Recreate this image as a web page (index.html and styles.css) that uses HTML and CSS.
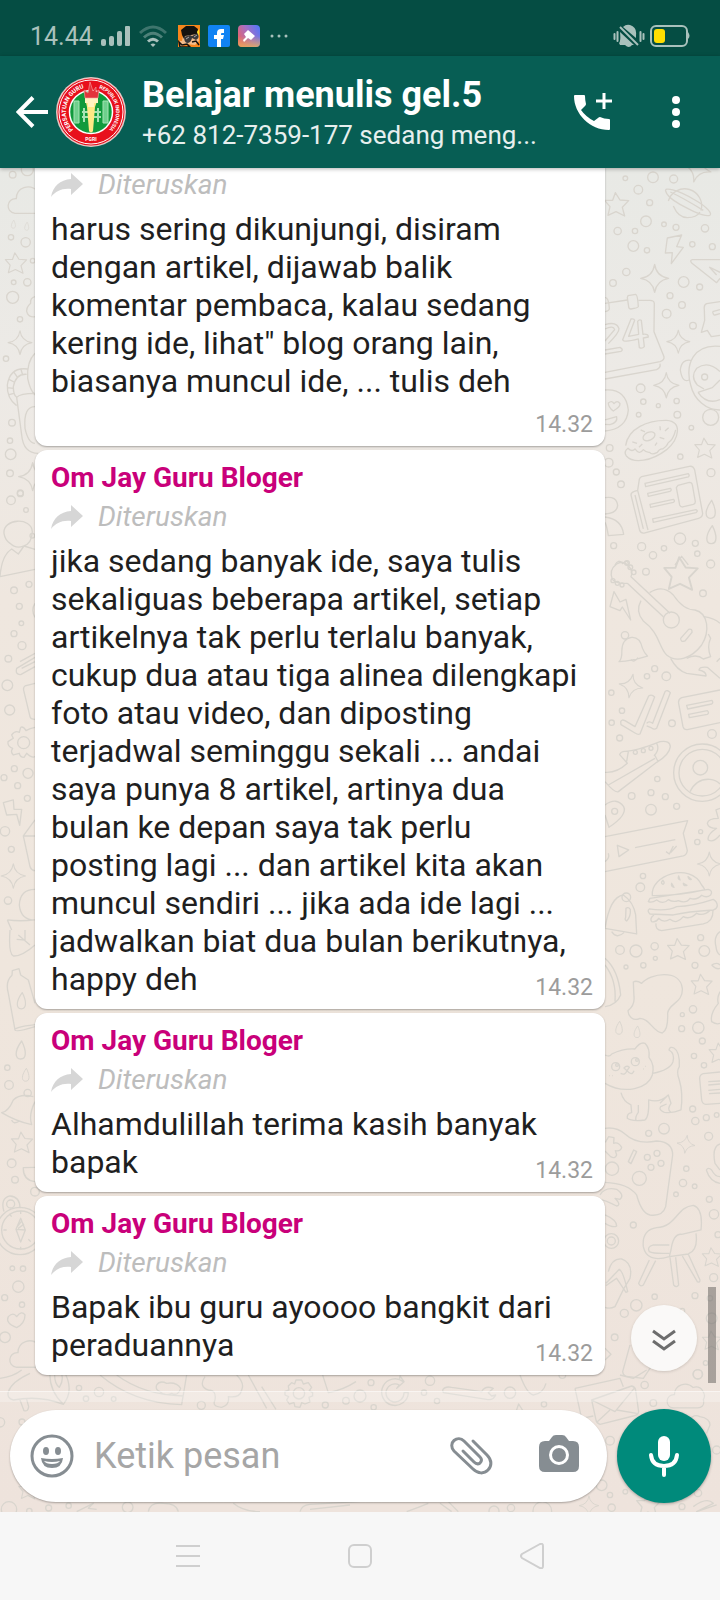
FILE: index.html
```html
<!DOCTYPE html>
<html lang="id">
<head>
    <meta charset="UTF-8">
    <meta name="viewport" content="width=device-width, initial-scale=1.0">
    <title>Belajar menulis gel.5</title>
    <link rel="stylesheet" href="styles.css">
</head>
<body>
    <div class="status-bar">
        <div class="status-left">
            <span class="clock">14.44</span>
            <svg class="signal" width="30" height="22" viewBox="0 0 30 22">
                <rect x="0" y="14" width="5" height="7" rx="2"/>
                <rect x="8" y="11" width="5" height="10" rx="2"/>
                <rect x="16" y="6" width="5" height="15" rx="2"/>
                <rect x="24" y="1" width="5" height="20" rx="1"/>
            </svg>
            <svg class="wifi" width="28" height="22" viewBox="0 0 28 22">
                <g fill="none" stroke="#a9c1bc" stroke-width="3">
                    <path d="M1 8Q14-4 27 8" opacity=".35"/>
                    <path d="M5 12.500Q14 4 23 12.500" opacity=".45"/>
                    <path d="M9 16.500Q14 12 19 16.500"/>
                </g>
                <path d="M11.500 19.500Q14 17.500 16.500 19.500L14 22z"/>
            </svg>
            <svg class="app" width="22" height="22" viewBox="0 0 22 22">
                <rect width="22" height="22" fill="#f7861c"/>
                <path d="M5 11L20 6L21 16L17 20L8 19L2 22L1 18Q1 15 4 16z" fill="#f4bd8c"/>
                <path d="M3 5L8 1H16L20 4L19 9L7 11L6 14L4 10z" fill="#15120f"/>
                <path d="M6 12L12 10L14 11L20 8Q22 13 18 15L14 13Q13 18 9 18Q6 17 6 12z" fill="#3a3a3c"/>
                <path d="M8 14L11 12M16 12L19 10" stroke="#aaa"/>
                <path d="M1 17L4 20L9 19L12 22H2zM14 17L18 16L21 20" fill="none" stroke="#15120f" stroke-width="1.500"/>
                <path d="M19 7L21 4V11z" fill="#ffe01a"/>
            </svg>
            <svg class="app" width="22" height="22" viewBox="0 0 22 22">
                <rect width="22" height="22" rx="2" fill="#1183f3"/>
                <path d="M9 22V14H6V10H9V8Q9 4 13 4H16V8H14Q13 8 13 9V10H16L15 14H13V22z" fill="#fff"/>
            </svg>
            <svg class="app" width="22" height="22" viewBox="0 0 22 22">
                <defs>
                    <linearGradient id="cleaner" x1="0" y1=".7" x2="1" y2=".2">
                        <stop offset="0" stop-color="#ea6263"/>
                        <stop offset=".5" stop-color="#a76fc4"/>
                        <stop offset="1" stop-color="#5777f5"/>
                    </linearGradient>
                    <linearGradient id="cleaner-low" x1="0" y1="0" x2="0" y2="1">
                        <stop offset=".5" stop-color="#e6b35b" stop-opacity="0"/>
                        <stop offset="1" stop-color="#e6b35b" stop-opacity=".8"/>
                    </linearGradient>
                </defs>
                <rect width="22" height="22" rx="4" fill="url(#cleaner)"/>
                <rect width="22" height="22" rx="4" fill="url(#cleaner-low)"/>
                <path d="M10 5L17 11L13 15L10 13L6 17L5 15L8 12L6 9z" fill="#fff"/>
            </svg>
            <svg class="more" width="18" height="4" viewBox="0 0 18 4">
                <circle cx="2" cy="2" r="1.500"/>
                <circle cx="9" cy="2" r="1.500"/>
                <circle cx="16" cy="2" r="1.500"/>
            </svg>
        </div>
        <div class="status-right">
            <svg width="32" height="24" viewBox="0 0 32 24">
                <path d="M12 21H19Q16 25 12 21M6 19Q8 17 7 8L21 21H7zM10 3Q13 0 17 1Q24 3 23 11V14z" fill="#a9c1bc"/>
                <path d="M7 3L25 21" stroke="#a9c1bc" stroke-width="2"/>
                <path d="M1.500 10v5M4.500 8v9M27.500 8v9M30.500 10v5" stroke="#a9c1bc" stroke-width="2" stroke-linecap="round"/>
            </svg>
            <svg width="40" height="22" viewBox="0 0 40 22">
                <rect x="1" y="1" width="36" height="20" rx="5" fill="none" stroke="#a9c1bc" stroke-width="2"/>
                <path d="M38 7Q41 11 38 14z" fill="#a9c1bc"/>
                <rect x="4" y="4" width="11" height="14" rx="3" fill="#ffdd00"/>
            </svg>
        </div>
    </div>

    <header class="chat-header">
        <button class="icon-btn" aria-label="Kembali">
            <svg width="32" height="32" viewBox="0 0 32 32" fill="none" stroke="#fff" stroke-width="4">
                <path d="M32 16H3M17 1.500L2.500 16L17 30.500"/>
            </svg>
        </button>
        <svg class="avatar" width="70" height="70" viewBox="0 0 70 70">
            <defs>
                <path id="ring-left" d="M17.300 52.700A25 25 0 0 1 30 10.500"/>
                <path id="ring-right" d="M43 11.300A25 25 0 0 1 44.400 58.200"/>
            </defs>
            <circle cx="35" cy="35" r="35" fill="#e9c7c4"/>
            <circle cx="35" cy="35" r="33.500" fill="#e8101c"/>
            <circle cx="35" cy="35" r="32" fill="none" stroke="#fff"/>
            <circle cx="35" cy="35" r="21.500" fill="#109a3c" stroke="#fff" stroke-width="1.500"/>
            <g fill="#6fd08d" stroke="#a6e3b4">
                <path d="M18 24H23V46H18zM47 24H52V46H47z"/>
                <path d="M26 35H45M26 40H45M28 31V45M42 31V45" fill="none" stroke-width="2"/>
            </g>
            <path d="M29 21L31 30L33 54Q35 57 37 54L39 30L42 21z" fill="#ffe985"/>
            <path d="M29 21H42V26H38V30H32V26H29z" fill="#fff3c0"/>
            <path d="M29 21L28 13L32 16L34 5L37 14L40 10L40 15L43 13L42 21z" fill="#e2343c" stroke="#f6a6a4" stroke-width=".600"/>
            <g class="ring-text">
                <text font-size="6"><textPath href="#ring-left">PERSATUAN GURU</textPath></text>
                <text font-size="5"><textPath href="#ring-right">REPUBLIK INDONESIA</textPath></text>
                <text font-size="5" x="35" y="64" text-anchor="middle">PGRI</text>
            </g>
        </svg>
        <div class="chat-title">
            <h1>Belajar menulis gel.5</h1>
            <p>+62 812-7359-177 sedang meng...</p>
        </div>
        <button class="icon-btn call" aria-label="Panggilan grup">
            <svg width="40" height="40" viewBox="0 0 40 40" fill="#fff">
                <path d="M3 3H12Q13 3 13 4Q13 8 14 12Q14 13 13 14L9 18Q14 25 22 29L26 26Q27 25 28 25Q32 27 37 27Q38 27 38 28V37Q38 38 37 38C18 38 2 22 2 4Q2 3 3 3z"/>
                <path d="M32 1V17M24 9H40" stroke="#fff" stroke-width="3"/>
            </svg>
        </button>
        <button class="icon-btn" aria-label="Menu">
            <svg width="8" height="32" viewBox="0 0 8 32" fill="#fff">
                <circle cx="4" cy="4" r="4"/>
                <circle cx="4" cy="16" r="4"/>
                <circle cx="4" cy="28" r="4"/>
            </svg>
        </button>
    </header>

    <main class="conversation">
        <!-- wallpaper doodles, groups are drawn at 3x -->
        <svg class="wallpaper" viewBox="0 168 720 1344" preserveAspectRatio="xMidYMin slice" aria-hidden="true">
            <defs>
                <path id="star" d="M-4-36L10-14L36-12L17 8L24 34L-2 21L-26 32L-20 6L-36-13L-12-13z"/>
                <path id="spark" d="M0-42Q5-6 42 0Q6 6 0 42Q-6 6-42 0Q-6-5 0-42z"/>
                <path id="drop" d="M3-28C-19 2-18 26 0 26S18 2 3-28z"/>
                <path id="bell" d="M-40 35Q-30 25-31 0Q-30-38 0-42Q26-44 34-8Q40 8 50 17Q0 32-40 35zM-2 28Q8 40 20 22"/>
                <path id="cloud" d="M0 82C-30 78-26 36 4 38C4 4 44-8 66 14C96 4 110 40 100 54C106 74 92 82 82 82z"/>
            </defs>
            <g transform="translate(500 165) scale(.3333)">
                <circle cx="376" cy="40" r="7"/><circle cx="459" cy="37" r="16"/><circle cx="521" cy="42" r="12"/>
                <circle cx="415" cy="74" r="13"/><circle cx="449" cy="113" r="9"/><circle cx="438" cy="169" r="16"/>
                <circle cx="492" cy="178" r="7"/><circle cx="528" cy="187" r="9"/><circle cx="615" cy="190" r="11"/>
                <circle cx="353" cy="198" r="11"/><circle cx="405" cy="198" r="8"/><circle cx="400" cy="243" r="16"/>
                <circle cx="441" cy="256" r="8"/><circle cx="577" cy="238" r="8"/><circle cx="637" cy="245" r="9"/>
                <circle cx="379" cy="321" r="11"/><circle cx="339" cy="354" r="10"/><circle cx="551" cy="351" r="16"/>
                <circle cx="599" cy="366" r="9"/><circle cx="510" cy="392" r="9"/><circle cx="546" cy="420" r="10"/>
                <circle cx="500" cy="446" r="13"/><circle cx="579" cy="482" r="10"/><circle cx="422" cy="670" r="13"/>
                <circle cx="430" cy="710" r="8"/><circle cx="475" cy="722" r="6"/><circle cx="530" cy="708" r="8"/>
                <circle cx="532" cy="749" r="10"/><circle cx="416" cy="749" r="7"/><circle cx="574" cy="788" r="7"/>
                <circle cx="541" cy="875" r="8"/><circle cx="329" cy="849" r="10"/><circle cx="326" cy="893" r="13"/>
                <circle cx="349" cy="921" r="9"/><circle cx="363" cy="958" r="10"/><circle cx="633" cy="923" r="12"/>
                <circle cx="540" cy="1121" r="17"/><circle cx="586" cy="1135" r="9"/><circle cx="592" cy="1166" r="8"/>
                <circle cx="425" cy="1145" r="12"/><circle cx="492" cy="1150" r="8"/><circle cx="459" cy="1171" r="11"/>
                <circle cx="341" cy="1142" r="9"/>
                <use href="#star" x="350" y="119"/>
                <use href="#star" transform="translate(615 850) scale(.85)"/>
                <use href="#spark" x="464" y="340"/>
                <use href="#spark" transform="translate(535 530) scale(.82)"/>
                <use href="#spark" transform="translate(499 661) scale(.9)"/>
                <use href="#spark" transform="translate(592 10) rotate(15)"/>
                <use href="#drop" x="632" y="1034"/>
                <use href="#drop" x="634" y="1110"/>
                <path d="M505 108A44 44 0 1 1 603 137M520 123Q535 158 562 158Q590 158 600 141"/>
                <path d="M497 78C492 66 530 72 585 105C625 128 638 148 629 151C611 156 577 138 540 118C508 100 499 88 497 78zM511 81Q548 98 610 136"/>
                <path d="M502 219L545 210L530 245L550 247L514 296L517 263L496 264z"/>
                <path d="M660 284H577Q568 286 576 295L650 353L660 340M628 306L660 322M628 306L650 330"/>
                <path d="M315 415L382 405M415 406L450 406Q462 406 463 415L462 500L492 575Q494 586 480 590L315 622M315 642L470 614Q483 608 480 596"/>
                <path d="M384 392L407 388Q413 389 415 425Q414 429 393 432Q386 431 386 425L382 398zM315 398Q326 396 328 430Q329 437 315 440"/>
                <path d="M315 479Q350 468 357 491Q358 503 325 536M315 492Q340 480 344 494L315 528M393 462L368 524Q372 534 415 522L418 548Q427 552 433 545L430 519L445 516Q446 506 429 508L424 466Q418 462 413 469L416 508L386 514L404 466Q402 460 393 462zM315 555L360 547Q372 554 363 559L315 567"/>
                <path d="M660 410L620 416Q611 420 613 433L614 466L604 502L622 496L634 515L660 511M638 440L660 434M638 440Q640 452 645 450L660 446"/>
                <path d="M660 544C580 536 555 598 572 660C583 706 620 736 660 735M572 586Q545 582 541 615Q547 655 567 645M660 620Q625 585 590 610Q570 635 592 660L612 672M594 682Q620 720 660 704M594 682L637 668L660 645"/>
                <circle cx="614" cy="636" r="9"/><circle cx="632" cy="757" r="24"/>
                <path d="M315 675Q378 670 385 735Q380 792 315 798M325 714Q336 705 342 716Q352 704 360 716Q361 726 340 738Q325 727 325 714zM315 765L350 755Q354 773 330 779L315 778"/>
                <path d="M377 842C384 790 444 765 500 766C548 770 538 822 500 854C455 889 401 897 379 873Q370 860 384 850Q396 862 405 852Q418 871 430 854Q438 863 449 862Q455 871 472 862Q480 850 488 852Q502 843 504 834Q520 825 527 795"/>
                <ellipse cx="447" cy="814" rx="19" ry="12" transform="rotate(-25 447 814)"/>
                <path d="M397 831L411 835M427 837L417 847M422 795L435 801M480 784L481 796M506 788L495 798M479 817L493 822M471 833L465 842"/>
                <path d="M425 935L568 904Q580 902 584 915L608 1045Q608 1057 596 1060L435 1104Q423 1107 419 1096L393 990Q393 982 403 979L413 976L418 943Q420 937 425 935zM413 976L444 1095M405 990L430 1092M435 955L565 926Q570 932 565 936L437 965zM443 985L511 970Q517 975 510 979L445 994zM450 1018L520 1003Q527 1008 520 1012L452 1027zM458 1062L588 1034Q596 1038 588 1043L460 1072zM534 961L568 952Q576 952 577 959L586 1010Q586 1016 580 1018L548 1026Q541 1026 539 1020L529 968z"/>
                <path d="M315 998Q350 992 353 1022Q350 1046 315 1047M315 1056Q365 1062 371 1108L325 1112Q320 1080 315 1072"/>
                <path d="M525 1200L545 1174L565 1200M345 1200Q355 1180 368 1196Q385 1180 385 1200"/>
            </g>
            <g transform="translate(500 560) scale(.3333)">
                <circle cx="438" cy="35" r="10"/><circle cx="632" cy="12" r="12"/><circle cx="609" cy="100" r="10"/>
                <circle cx="464" cy="326" r="9"/><circle cx="441" cy="349" r="8"/><circle cx="499" cy="349" r="13"/>
                <circle cx="334" cy="398" r="8"/><circle cx="366" cy="452" r="8"/><circle cx="335" cy="488" r="8"/>
                <circle cx="359" cy="534" r="9"/><circle cx="516" cy="490" r="10"/><circle cx="636" cy="522" r="13"/>
                <circle cx="472" cy="657" r="8"/><circle cx="453" cy="698" r="9"/><circle cx="395" cy="708" r="10"/>
                <circle cx="496" cy="710" r="9"/><circle cx="530" cy="739" r="9"/><circle cx="453" cy="749" r="16"/>
                <circle cx="602" cy="815" r="6"/><circle cx="592" cy="846" r="8"/><circle cx="429" cy="948" r="8"/>
                <circle cx="421" cy="982" r="13"/><circle cx="602" cy="1133" r="9"/><circle cx="464" cy="1159" r="11"/>
                <circle cx="360" cy="1170" r="13"/><circle cx="408" cy="1173" r="18"/><circle cx="613" cy="1173" r="16"/>
                <circle cx="466" cy="1195" r="6"/>
                <use href="#star" transform="translate(543 42) scale(1.4)"/>
                <use href="#star" transform="translate(535 1168) scale(.9)"/>
                <use href="#spark" transform="translate(393 378) scale(.85) rotate(10)"/>
                <use href="#spark" transform="translate(628 912) scale(.85)"/>
                <use href="#bell" transform="translate(395 272) scale(.95)"/>
                <circle cx="375" cy="226" r="11"/>
                <path d="M337 58Q326 30 350 12Q368 0 383 15Q402 35 393 50L510 160M382 70L490 170M337 58Q350 72 382 70"/>
                <circle cx="381" cy="9" r="7"/><circle cx="391" cy="22" r="7"/><circle cx="401" cy="37" r="7"/><circle cx="339" cy="62" r="6"/><circle cx="352" cy="70" r="6"/><circle cx="366" cy="75" r="6"/>
                <path d="M449 98Q488 72 520 105Q550 150 585 150C626 160 630 215 605 255C575 295 530 310 500 285C475 260 480 220 430 183Q405 155 423 122"/>
                <circle cx="514" cy="180" r="24"/>
                <path d="M542 235L566 208Q577 205 576 217L555 243Q542 248 542 235zM612 170Q645 175 660 190M512 295Q530 330 560 340L618 348Q620 335 597 330Q598 320 622 322L660 355M560 295Q590 280 610 297L632 290Q620 260 632 235L625 222M650 305L660 295"/>
                <path d="M342 95L330 140L360 152L367 141L392 180L378 118L360 126z"/>
                <path d="M362 485Q365 477 375 482L405 500L446 408Q455 402 464 411L420 522Q414 525 405 519L363 494zM440 490Q447 481 458 490L495 395Q502 388 511 398L470 505Q463 510 455 504L440 498"/>
                <path d="M660 390L545 413Q534 418 536 430L549 500Q552 510 562 509L660 488M560 436L636 421Q641 428 635 432L563 447zM566 463L622 452Q629 459 622 463L568 473z"/>
                <path d="M315 637Q350 640 382 610L359 584Q362 575 372 574Q405 575 480 545Q510 540 511 560Q508 585 470 607L355 695Q345 700 315 665M380 604L385 575M325 675L465 595M462 587Q480 570 470 550M464 585L475 606"/>
                <circle cx="406" cy="577" r="6"/><circle cx="430" cy="572" r="6"/><circle cx="453" cy="565" r="6"/>
                <circle cx="607" cy="638" r="86"/><circle cx="607" cy="638" r="70"/><circle cx="601" cy="623" r="22"/>
                <path d="M570 695Q590 655 630 658Q650 660 660 672"/>
                <circle cx="344" cy="754" r="9"/>
                <path d="M315 735Q350 710 371 740Q383 765 327 802L315 765M315 830L563 782L550 820L562 872Q560 885 550 888L315 935M352 856L357 890L386 870zM405 863L526 839M498 875L508 882L520 858M512 878L530 858M315 905Q330 895 325 880"/>
                <path d="M660 745L648 750L655 775Q625 775 622 790Q625 805 650 805Q620 825 625 840Q640 850 660 825"/>
                <path d="M457 1007C450 945 570 905 605 975Q617 990 612 990Q540 1008 457 1007zM450 1015L625 988Q640 992 632 1005Q620 1015 605 1006Q590 1022 570 1015Q558 1032 535 1022Q520 1028 505 1019Q490 1035 470 1020Q455 1030 445 1025zM448 1047Q500 1055 530 1040Q580 1038 640 1018Q652 1025 652 1038Q650 1048 640 1050Q560 1055 520 1065L450 1062Q440 1052 448 1047zM462 1065Q448 1075 455 1085Q468 1088 476 1075Q490 1090 510 1078Q530 1095 550 1070Q570 1080 590 1060Q610 1070 632 1050M468 1090Q465 1110 485 1112L610 1092Q640 1085 639 1052"/>
                <path d="M489 961Q480 970 489 973Q496 970 489 961zM515 970Q512 980 522 982zM536 948Q532 958 540 960zM550 970Q550 980 561 976zM564 950Q567 962 574 958z"/>
                <circle cx="379" cy="1012" r="13"/>
                <path d="M315 1105Q330 1010 370 1005Q400 1025 407 1065L410 1122L315 1105M335 1115Q350 1138 372 1118M378 1045Q385 1040 391 1048Q393 1070 380 1083Q373 1080 377 1072z"/>
                <path d="M660 1115Q640 1130 648 1160Q650 1180 660 1185"/>
            </g>
            <g transform="translate(500 950) scale(.3333)">
                <circle cx="430" cy="46" r="8"/><circle cx="378" cy="51" r="6"/><circle cx="585" cy="46" r="9"/>
                <circle cx="579" cy="178" r="11"/><circle cx="547" cy="194" r="6"/><circle cx="545" cy="236" r="9"/>
                <circle cx="595" cy="233" r="17"/><circle cx="607" cy="273" r="9"/><circle cx="582" cy="318" r="8"/>
                <circle cx="612" cy="346" r="8"/><circle cx="578" cy="477" r="9"/><circle cx="586" cy="513" r="11"/>
                <circle cx="619" cy="503" r="9"/><circle cx="650" cy="495" r="7"/><circle cx="492" cy="536" r="16"/>
                <circle cx="446" cy="550" r="9"/><circle cx="626" cy="559" r="12"/><circle cx="559" cy="656" r="8"/>
                <circle cx="549" cy="699" r="11"/><circle cx="584" cy="709" r="7"/><circle cx="528" cy="733" r="7"/>
                <circle cx="628" cy="748" r="9"/><circle cx="642" cy="793" r="14"/><circle cx="400" cy="825" r="9"/>
                <circle cx="654" cy="854" r="9"/><circle cx="641" cy="983" r="12"/><circle cx="464" cy="1040" r="8"/>
                <circle cx="585" cy="1037" r="9"/><circle cx="409" cy="1066" r="17"/><circle cx="373" cy="1090" r="12"/>
                <circle cx="630" cy="1045" r="8"/><circle cx="635" cy="1105" r="16"/><circle cx="344" cy="1162" r="10"/>
                <circle cx="593" cy="1273" r="14"/><circle cx="617" cy="1239" r="7"/><circle cx="547" cy="1082" r="7"/>
                <use href="#star" transform="translate(605 104) scale(.87)"/>
                <use href="#star" transform="translate(636 922) scale(.8)"/>
                <use href="#star" transform="translate(636 1172) scale(.8)"/>
                <use href="#star" transform="translate(658 310) scale(.85)"/>
                <use href="#spark" transform="translate(558 583) scale(.65) rotate(8)"/>
                <use href="#drop" transform="translate(357 234) scale(.72)"/>
                <use href="#drop" transform="translate(411 246) scale(.65)"/>
                <path d="M400 96Q410 90 425 100C450 70 540 55 547 115C550 160 505 160 503 190Q505 240 487 249C460 248 450 205 420 205C400 215 385 200 384 182Q405 165 402 140z"/>
                <path d="M315 25Q355 60 362 135Q350 165 315 170M315 45Q350 90 345 155"/>
                <path d="M315 315Q330 322 335 312Q370 295 405 297Q420 275 435 280Q450 295 447 322Q465 345 457 375C445 415 375 435 315 400M458 370Q510 360 519 335Q525 310 507 300Q510 288 522 294Q540 305 538 350Q528 365 538 390Q550 430 543 480Q520 490 493 487Q475 480 482 470L500 462M363 428Q370 455 393 465L395 488Q380 490 382 505Q395 515 435 510Q448 500 446 450Q480 460 505 435L513 460Q500 478 512 486M415 465V487Q405 500 408 512M500 440L480 460"/>
                <circle cx="347" cy="350" r="12"/><circle cx="406" cy="335" r="12"/><circle cx="351" cy="345" r="4"/><circle cx="411" cy="330" r="4"/>
                <path d="M372 354Q380 345 388 352L381 362zM381 362Q376 377 362 370M381 362Q395 380 402 362M328 377h2M336 377h2M429 357h2M435 349h2"/>
                <path d="M660 366L610 371Q599 374 599 385L605 450Q607 462 618 463L660 460M625 395L660 393M625 405L660 402M625 421L660 418M627 431L660 429"/>
                <path d="M315 535Q350 530 375 552Q410 585 470 573Q518 575 518 615L497 770Q488 800 450 795Q425 790 410 735Q385 700 315 697M316 577L326 560L342 563L341 580Q355 575 365 592Q362 605 346 602L350 615Q345 628 332 620L315 603M401 600L410 605L393 641L385 635z"/>
                <circle cx="336" cy="656" r="20"/><circle cx="418" cy="685" r="21"/><circle cx="442" cy="622" r="9"/><circle cx="471" cy="610" r="9"/><circle cx="453" cy="652" r="9"/><circle cx="483" cy="640" r="9"/>
                <path d="M300 735Q315 710 350 718Q375 735 360 748L345 745Q365 765 350 768Q315 750 300 748M315 795Q350 810 350 828Q340 835 315 820"/>
                <circle cx="334" cy="873" r="22"/><circle cx="334" cy="873" r="12"/>
                <path d="M430 890Q425 840 470 833C530 830 530 770 580 766Q610 775 603 840L545 853Q520 850 513 900L508 920Q440 940 430 890zM588 850Q595 900 565 912L508 920M508 885H460Q440 890 448 905Q460 912 508 910M448 930L416 1000Q420 1012 430 1005L467 932M510 922L521 1005Q530 1015 536 1005L527 922M547 918L592 995Q600 1000 600 990L565 913"/>
                <path d="M325 965Q335 925 365 927Q400 940 390 985L372 1015L345 1070Q330 1078 315 1072M318 1000L358 958Q370 965 383 1025L378 1027L350 985L318 1007"/>
                <path d="M390 1185L368 1265Q370 1280 385 1280L430 1285L460 1240M315 1195L333 1213L315 1230M660 125Q650 145 655 160Q630 190 635 215Q650 225 660 220M660 582Q635 590 645 640L660 660M619 660Q625 650 635 660Q645 680 660 680M619 660Q630 695 660 700M635 45Q650 35 660 45M635 45Q650 60 660 55"/>
            </g>
            <g transform="translate(0 165) scale(.3333)">
                <circle cx="38" cy="29" r="10"/><circle cx="82" cy="14" r="18"/><circle cx="33" cy="217" r="8"/>
                <circle cx="77" cy="232" r="14"/><circle cx="98" cy="287" r="7"/><circle cx="41" cy="352" r="7"/>
                <circle cx="82" cy="352" r="11"/><circle cx="38" cy="397" r="18"/><circle cx="60" cy="463" r="8"/>
                <circle cx="18" cy="581" r="8"/><circle cx="36" cy="773" r="10"/><circle cx="30" cy="827" r="8"/>
                <circle cx="32" cy="868" r="16"/><circle cx="30" cy="925" r="10"/><circle cx="61" cy="984" r="9"/>
                <use href="#cloud" x="45" y="63"/>
                <use href="#drop" transform="translate(40 178) scale(.45)"/>
                <use href="#drop" transform="translate(80 184) scale(.45)"/>
                <use href="#star" transform="translate(48 295) scale(.88)"/>
                <use href="#spark" transform="translate(60 533) scale(.85)"/>
                <use href="#spark" x="98" y="935"/>
                <path d="M105 395Q90 398 92 415Q75 430 82 445Q90 458 105 455M105 565Q80 590 83 640Q90 675 105 690M83 612Q30 605 22 660Q20 700 50 722M80 628Q48 625 40 665Q40 690 50 697M62 610L68 630M42 622L53 638M27 643L42 651M22 668L40 670M24 690L42 685M50 697Q60 685 105 685M50 697L65 810Q70 865 115 865M105 725Q70 725 75 790Q85 835 105 835"/>
            </g>
            <g transform="translate(0 480) scale(.3333)">
                <circle cx="33" cy="61" r="13"/><circle cx="61" cy="41" r="9"/><circle cx="78" cy="90" r="7"/>
                <circle cx="42" cy="331" r="10"/><circle cx="87" cy="313" r="9"/><circle cx="58" cy="379" r="9"/>
                <circle cx="64" cy="430" r="7"/><circle cx="42" cy="461" r="9"/><circle cx="66" cy="497" r="12"/>
                <circle cx="25" cy="536" r="10"/><circle cx="22" cy="616" r="16"/><circle cx="29" cy="690" r="15"/>
                <circle cx="43" cy="866" r="9"/><circle cx="12" cy="893" r="9"/><circle cx="84" cy="880" r="15"/>
                <circle cx="53" cy="917" r="9"/><circle cx="82" cy="955" r="9"/><circle cx="15" cy="1054" r="14"/>
                <circle cx="34" cy="1108" r="9"/><circle cx="24" cy="1262" r="11"/><circle cx="97" cy="167" r="7"/>
                <circle cx="71" cy="788" r="18"/>
                <use href="#spark" transform="translate(40 1188) scale(.87)"/>
                <path d="M12 160C8 115 95 110 97 155C95 205 50 210 30 190Q15 180 12 160zM0 290Q5 225 35 207L55 222L72 198L105 208M0 290L105 268M105 370Q92 390 105 412M105 520L60 545M105 532L50 565Q45 585 62 584L105 560M105 545L65 565M105 610L75 618Q68 622 72 635L90 710Q92 718 105 718"/>
                <path d="M62 742Q70 738 78 752Q90 745 105 742M62 742L58 757Q45 750 35 765L40 775L24 785Q22 800 38 805Q30 815 40 825L58 820Q60 832 72 832L80 820Q95 835 105 830"/>
                <path d="M10 968L40 960L42 988L65 988L59 1036L50 1003L20 1005zM105 1020L70 1068L90 1160Q95 1172 105 1172M70 1068H105M105 1228Q60 1228 58 1275Q62 1320 105 1320M22 1320Q60 1325 105 1320M22 1320L35 1350"/>
            </g>
            <g transform="translate(0 930) scale(.3333)">
                <circle cx="22" cy="413" r="8"/><circle cx="27" cy="465" r="13"/><circle cx="83" cy="489" r="11"/>
                <circle cx="35" cy="700" r="13"/><circle cx="45" cy="749" r="10"/><circle cx="105" cy="785" r="13"/>
                <circle cx="37" cy="1015" r="7"/><circle cx="69" cy="1016" r="8"/><circle cx="55" cy="1070" r="17"/>
                <circle cx="14" cy="1103" r="9"/><circle cx="66" cy="1124" r="8"/><circle cx="15" cy="1222" r="16"/>
                <circle cx="32" cy="822" r="12"/><circle cx="62" cy="900" r="57"/><circle cx="60" cy="903" r="71"/>
                <use href="#drop" x="62" y="361"/>
                <use href="#drop" transform="translate(77 435) scale(.72)"/>
                <use href="#drop" transform="translate(64 213) scale(.9)"/>
                <use href="#star" transform="translate(66 638) scale(.88)"/>
                <use href="#cloud" x="50" y="1230"/>
                <path d="M30 0Q25 70 40 78Q65 80 105 45M55 15L90 45M75 0V30L50 28M36 136L37 122L57 116L62 135L85 150L105 220M36 136Q15 155 25 190L45 300Q48 308 105 290M45 300Q40 292 105 284M100 500Q60 490 40 510Q25 545 5 548Q50 575 95 584Q85 555 105 515M35 570Q40 585 58 573M105 712L70 713Q68 750 105 755M12 845Q0 805 30 798Q60 800 60 835"/>
                <path d="M62 865L76 900L62 936L48 898zM48 898L76 900M52 890L66 872M54 896L72 882M62 852V842M10 900H20M62 950V958M35 860L28 852M92 935L85 928"/>
                <path d="M50 1193Q15 1180 25 1160Q40 1145 50 1160Q65 1140 75 1155Q75 1180 50 1193z"/>
            </g>
            <!-- lower band behind the message box -->
            <g transform="translate(0 1370) scale(.3333)">
                <circle cx="237" cy="54" r="8"/><circle cx="297" cy="66" r="14"/><circle cx="258" cy="86" r="8"/>
                <circle cx="341" cy="87" r="7"/><circle cx="604" cy="106" r="12"/><circle cx="976" cy="105" r="9"/>
                <circle cx="1038" cy="92" r="10"/><circle cx="897" cy="70" r="17"/><circle cx="66" cy="156" r="9"/>
                <circle cx="0" cy="157" r="14"/><circle cx="27" cy="418" r="23"/><circle cx="88" cy="423" r="8"/>
                <circle cx="146" cy="414" r="9"/><circle cx="206" cy="407" r="8"/><circle cx="383" cy="412" r="16"/>
                <use href="#star" transform="translate(85 360) scale(.8)"/>
                <path d="M25 65Q35 35 90 10M25 65Q20 85 40 90Q120 75 190 103Q225 60 190 0M150 0Q145 60 190 103M60 90L72 122Q85 125 86 110L80 88M165 0Q160 40 178 52Q195 25 180 0M0 25Q40 20 65 0"/>
                <path d="M300 15Q400 100 545 104L560 15M350 15Q430 75 550 78M470 45Q480 30 500 40Q530 35 542 55Q535 80 515 70Q495 80 480 65Q465 60 470 45zM615 20Q595 50 625 60Q650 60 645 90Q635 110 665 112Q690 105 685 80Q720 85 725 60Q735 40 710 15M745 15L800 115M785 50L828 118M968 15L985 68Q1030 60 1068 35"/>
                <path d="M884 42L888 30H905L910 42L925 38L935 52L928 62L938 68V78L927 82L930 96L915 102L905 98L900 112L885 110L882 98L868 102L860 90L866 80L855 75V64L867 60L865 48L875 38z"/>
                <path d="M230 425L280 400L265 415L290 418M445 425Q450 395 490 400Q530 400 535 425M700 400Q730 425 780 425M900 425Q905 405 930 403L1080 395M930 418L1050 405"/>
            </g>
            <g transform="translate(360 1370) scale(.3333)">
                <circle cx="33" cy="38" r="9"/><circle cx="210" cy="32" r="14"/><circle cx="192" cy="68" r="8"/>
                <circle cx="231" cy="93" r="8"/><circle cx="41" cy="112" r="8"/><circle cx="450" cy="68" r="17"/>
                <circle cx="607" cy="15" r="10"/><circle cx="552" cy="103" r="8"/><circle cx="854" cy="45" r="11"/>
                <circle cx="880" cy="99" r="10"/><circle cx="1014" cy="13" r="14"/><circle cx="750" cy="212" r="13"/>
                <circle cx="725" cy="346" r="16"/><circle cx="750" cy="375" r="8"/><circle cx="796" cy="365" r="7"/>
                <circle cx="755" cy="413" r="11"/><circle cx="966" cy="410" r="9"/><circle cx="1014" cy="369" r="11"/>
                <circle cx="453" cy="414" r="11"/><circle cx="402" cy="423" r="15"/><circle cx="547" cy="423" r="28"/>
                <circle cx="1070" cy="240" r="12"/><circle cx="0" cy="78" r="18"/>
                <use href="#star" x="480" y="138"/>
                <use href="#spark" transform="translate(687 407) scale(.7)"/>
                <use href="#star" x="866" y="405"/>
                <use href="#cloud" transform="translate(940 40) scale(.9)"/>
                <path d="M130 35A40 40 0 1 0 145 68H132A27 27 0 1 1 118 45L110 55L132 35L120 18L118 30M248 60Q255 48 275 52L365 65Q375 45 400 55L385 68L395 78L407 75Q400 92 380 88L250 68zM480 15Q500 70 520 75Q550 70 558 40M645 55L780 25L790 50M645 55L665 145L700 138M695 90L815 48Q825 50 827 60L836 125Q835 135 820 138L720 163Q710 160 708 150zM695 90L765 125L825 52M712 155L750 120M770 120L830 130M780 15L820 25L860 0M990 150Q1000 130 1020 140Q1050 145 1050 165L1040 190M1000 410Q1040 380 1060 400L1010 425L1070 405M240 400L275 425M140 425Q180 410 205 400M265 395L295 425"/>
            </g>
        </svg>

        <section class="messages">
            <article class="bubble bubble-time-below">
                <h2>Om Jay Guru Bloger</h2>
                <p class="forwarded">
                    <svg width="32" height="24" viewBox="0 0 32 24"><path d="M0 24C2 13 9 7 20 6V0L32 11L20 22V16C11 15 5 18 0 24z"/></svg>
                    Diteruskan
                </p>
                <p class="text">harus sering dikunjungi, disiram dengan artikel, dijawab balik komentar pembaca, kalau sedang kering ide, lihat" blog orang lain, biasanya muncul ide, ... tulis deh</p>
                <time>14.32</time>
            </article>
            <article class="bubble">
                <h2>Om Jay Guru Bloger</h2>
                <p class="forwarded">
                    <svg width="32" height="24" viewBox="0 0 32 24"><path d="M0 24C2 13 9 7 20 6V0L32 11L20 22V16C11 15 5 18 0 24z"/></svg>
                    Diteruskan
                </p>
                <p class="text">jika sedang banyak ide, saya tulis sekaliguas beberapa artikel, setiap artikelnya tak perlu terlalu banyak, cukup dua atau tiga alinea dilengkapi foto atau video, dan diposting terjadwal seminggu sekali ... andai saya punya 8 artikel, artinya dua bulan ke depan saya tak perlu posting lagi ... dan artikel kita akan muncul sendiri ... jika ada ide lagi ... jadwalkan biat dua bulan berikutnya, happy deh</p>
                <time>14.32</time>
            </article>
            <article class="bubble">
                <h2>Om Jay Guru Bloger</h2>
                <p class="forwarded">
                    <svg width="32" height="24" viewBox="0 0 32 24"><path d="M0 24C2 13 9 7 20 6V0L32 11L20 22V16C11 15 5 18 0 24z"/></svg>
                    Diteruskan
                </p>
                <p class="text">Alhamdulillah terima kasih banyak bapak</p>
                <time>14.32</time>
            </article>
            <article class="bubble">
                <h2>Om Jay Guru Bloger</h2>
                <p class="forwarded">
                    <svg width="32" height="24" viewBox="0 0 32 24"><path d="M0 24C2 13 9 7 20 6V0L32 11L20 22V16C11 15 5 18 0 24z"/></svg>
                    Diteruskan
                </p>
                <p class="text">Bapak ibu guru ayoooo bangkit dari peraduannya</p>
                <time>14.32</time>
            </article>
            <button class="scroll-down" aria-label="Ke pesan terbaru">
                <svg width="24" height="22" viewBox="0 0 24 22" fill="none" stroke="#6d6d6d" stroke-width="3">
                    <path d="M1 2L12 10L23 2M1 12L12 20L23 12"/>
                </svg>
            </button>
            <div class="scrollbar"></div>
        </section>

        <div class="next-row"></div>

        <form class="composer">
            <div class="message-box">
                <button type="button" class="icon-btn" aria-label="Emoji">
                    <svg width="44" height="44" viewBox="0 0 44 44">
                        <circle cx="22" cy="22" r="20" fill="none" stroke="#868d92" stroke-width="3"/>
                        <ellipse cx="16" cy="17" rx="3" ry="4" fill="#868d92"/>
                        <ellipse cx="28" cy="17" rx="3" ry="4" fill="#868d92"/>
                        <path d="M11 24Q22 26 33 24Q32 34 22 34T11 24z" fill="#868d92"/>
                        <path d="M14 27Q22 29 30 27Q28 30 22 30T14 27z" fill="#fff"/>
                    </svg>
                </button>
                <input type="text" placeholder="Ketik pesan" aria-label="Ketik pesan">
                <button type="button" class="icon-btn" aria-label="Lampirkan">
                    <svg width="44" height="40" viewBox="0 0 44 40" fill="none" stroke="#868d92" stroke-width="3" stroke-linecap="round">
                        <path d="M24 5L38 19C43 24 43 30 39 34C35 38 29 38 24 33L5 15C2 12 2 7 5 4.500C8 2 12 2 15 5L31 21C33 23 33 25 31 27C29 28.500 27 28 25 26L14 15"/>
                    </svg>
                </button>
                <button type="button" class="icon-btn camera" aria-label="Kamera">
                    <svg width="40" height="42" viewBox="0 0 40 42">
                        <path d="M10 6L13 2Q14 0 17 0H23Q26 0 27 2L30 6H34Q40 6 40 12V31Q40 37 34 37H6Q0 37 0 31V12Q0 6 6 6z" fill="#868d92"/>
                        <circle cx="20" cy="20" r="8.500" fill="none" stroke="#fff" stroke-width="3"/>
                    </svg>
                </button>
            </div>
            <button type="button" class="mic" aria-label="Rekam suara">
                <svg width="30" height="42" viewBox="0 0 30 42">
                    <rect x="9" y="1" width="12" height="25" rx="6" fill="#fff"/>
                    <path d="M2 20Q3 31 15 31T28 20M15 31V40" fill="none" stroke="#fff" stroke-width="4" stroke-linecap="round"/>
                </svg>
            </button>
        </form>
    </main>

    <nav class="system-nav">
        <button aria-label="Aplikasi terbaru">
            <svg width="24" height="26" viewBox="0 0 24 26"><path d="M0 3H24M0 13H24M0 23H24"/></svg>
        </button>
        <button aria-label="Beranda">
            <svg width="24" height="26" viewBox="0 0 24 26"><rect x="1" y="2" width="22" height="22" rx="5"/></svg>
        </button>
        <button aria-label="Kembali ke layar sebelumnya">
            <svg width="24" height="26" viewBox="0 0 24 26"><path d="M20 1L2 11Q0 13 2 15L20 25Q23 26 23 23V3Q23 0 20 1z"/></svg>
        </button>
    </nav>
</body>
</html>
```

FILE: styles.css
```css
* {
    margin: 0;
    padding: 0;
    box-sizing: border-box;
}

body {
    display: flex;
    flex-direction: column;
    height: 100vh;
    font-family: Roboto, "Noto Sans", sans-serif;
    background: #f7f7f7;
    color: #1f1f1f;
}

button {
    border: none;
    background: none;
    cursor: pointer;
}

svg {
    display: block;
    flex-shrink: 0;
}

/* status bar */
.status-bar {
    display: flex;
    justify-content: space-between;
    flex-shrink: 0;
    height: 56px;
    padding: 16px 30px 0;
    background: #054d43;
    fill: #a9c1bc;
}

.status-left,
.status-right {
    display: flex;
    align-items: center;
    height: 40px;
    gap: 8px;
}

.status-right {
    gap: 5px;
}

.clock {
    font-size: 25px;
    color: #a9c1bc;
}

.wifi {
    margin-right: 3px;
}

.more {
    margin-left: 2px;
}

/* header */
.chat-header {
    display: flex;
    align-items: center;
    flex-shrink: 0;
    height: 112px;
    padding: 0 40px 0 16px;
    background: #075e54;
    color: #fff;
    box-shadow: 0 1px 4px rgba(0, 0, 0, 0.3);
    z-index: 1;
}

.avatar {
    margin: 0 16px 0 8px;
}

.ring-text {
    fill: #fff;
    font-weight: bold;
}

.chat-title {
    flex: 1;
    min-width: 0;
    padding-top: 4px;
}

.chat-title h1 {
    font-size: 36px;
    line-height: 42px;
    white-space: nowrap;
}

.chat-title p {
    font-size: 26px;
    line-height: 38px;
    white-space: nowrap;
    color: #e6efee;
}

.call {
    margin-right: 60px;
}

/* conversation */
.conversation {
    position: relative;
    display: flex;
    flex-direction: column;
    flex: 1;
    min-height: 0;
    background: linear-gradient(#e8e9e5, #edeae6 16%, #efe7df 32%, #efe6dd 60%, #eee3dc);
}

.wallpaper {
    position: absolute;
    inset: 0;
    width: 100%;
    height: 100%;
    fill: none;
    stroke: #d9d5ce;
    stroke-width: 4;
    stroke-linejoin: round;
}

.messages {
    position: relative;
    display: flex;
    flex-direction: column;
    justify-content: flex-end;
    flex: 1;
    min-height: 0;
    gap: 4px;
    padding: 0 115px 16px 35px;
    overflow: hidden;
}

.bubble {
    display: flex;
    flex-direction: column;
    flex-shrink: 0;
    padding: 11px 12px 7px 16px;
    border-radius: 12px;
    background: #fff;
    box-shadow: 0 1px 2px rgba(0, 0, 0, 0.3);
}

.bubble h2 {
    font-size: 28px;
    line-height: 34px;
    color: #c9007a;
}

.forwarded {
    display: flex;
    align-items: center;
    gap: 15px;
    margin-bottom: 3px;
    font-size: 28px;
    line-height: 44px;
    font-style: italic;
    color: #bdbdbd;
    fill: #d6d6d6;
}

.text {
    padding-right: 12px;
    font-size: 32px;
    line-height: 38px;
}

.bubble time {
    align-self: flex-end;
    margin-top: -24px;
    font-size: 23px;
    line-height: 28px;
    color: #9c9c9c;
}

.bubble-time-below time {
    margin-top: 11px;
}

.scroll-down {
    position: absolute;
    right: 23px;
    bottom: 20px;
    display: flex;
    align-items: center;
    justify-content: center;
    width: 66px;
    height: 66px;
    padding-top: 4px;
    border-radius: 50%;
    background: rgba(250, 250, 249, 0.95);
    box-shadow: 0 1px 3px rgba(0, 0, 0, 0.15);
}

.scrollbar {
    position: absolute;
    right: 4px;
    bottom: 8px;
    width: 8px;
    height: 96px;
    background: rgba(110, 105, 102, 0.55);
}

.next-row {
    position: relative;
    height: 11px;
    border-top: 1px solid rgba(255, 255, 255, 0.5);
    background: rgba(255, 255, 255, 0.25);
}

/* composer */
.composer {
    position: relative;
    display: flex;
    align-items: center;
    gap: 10px;
    padding: 7px 9px 9px 10px;
}

.message-box {
    display: flex;
    align-items: center;
    flex: 1;
    min-width: 0;
    height: 92px;
    padding: 0 28px 0 20px;
    border-radius: 46px;
    background: #fff;
    box-shadow: 0 1px 2px rgba(0, 0, 0, 0.3);
}

.message-box input {
    flex: 1;
    min-width: 0;
    margin: 0 20px;
    border: none;
    outline: none;
    font-family: inherit;
    font-size: 36px;
}

.message-box input::placeholder {
    color: #a6a6a6;
}

.camera {
    margin-left: 46px;
}

.mic {
    display: flex;
    align-items: center;
    justify-content: center;
    flex-shrink: 0;
    width: 94px;
    height: 94px;
    border-radius: 50%;
    background: #008a7b;
    box-shadow: 0 1px 3px rgba(0, 0, 0, 0.3);
}

/* system navigation */
.system-nav {
    display: flex;
    align-items: center;
    justify-content: center;
    flex-shrink: 0;
    gap: 148px;
    height: 88px;
    background: #f7f7f7;
    fill: none;
    stroke: #cfcfcf;
    stroke-width: 2;
}
```
